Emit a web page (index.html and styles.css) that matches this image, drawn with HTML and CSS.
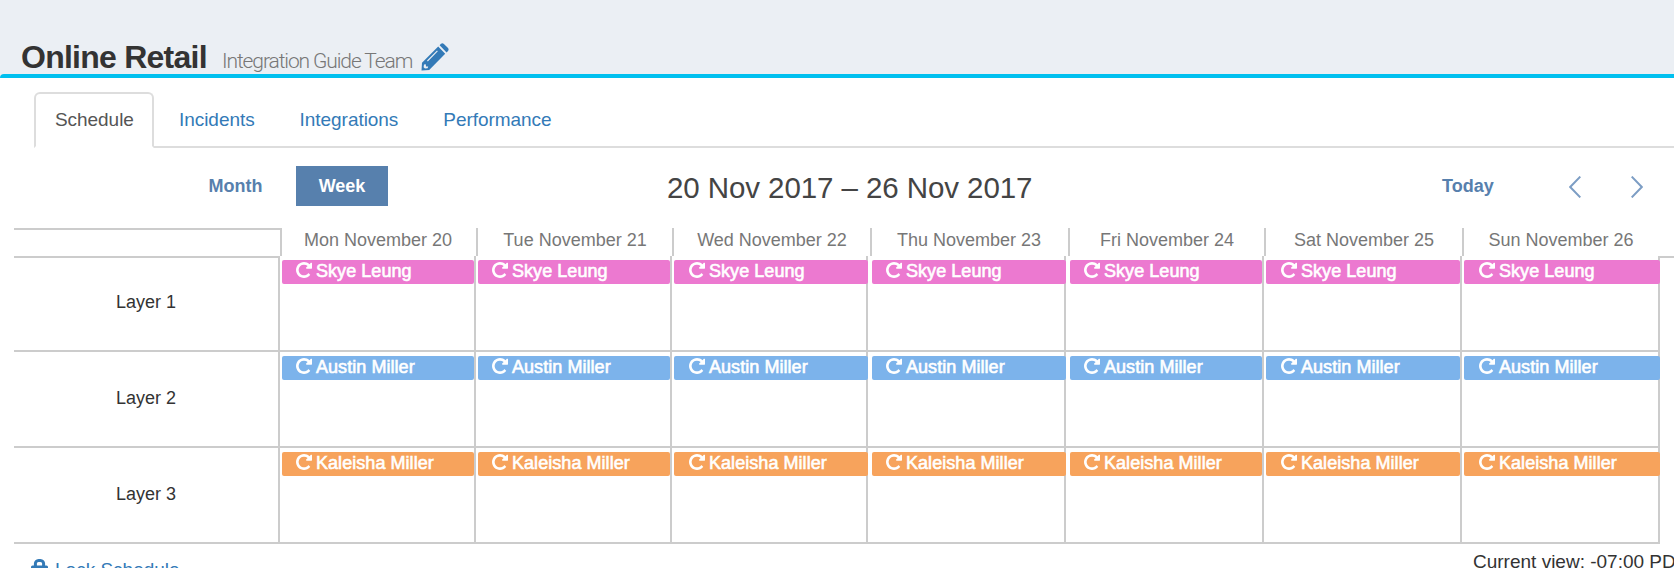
FILE: index.html
```html
<!DOCTYPE html>
<html lang="en">
  <head>
    <meta charset="UTF-8" />
    <meta name="viewport" content="width=device-width, initial-scale=1.0" />
    <title>Online Retail</title>
    <link rel="stylesheet" href="styles.css">
  </head>

  <body>
    <svg class="sprite">
      <symbol id="redo" viewBox="128 128 1536 1536">
        <path fill="#fff" d="M1664 256v448q0 26-19 45t-45 19h-448q-42 0-59-40-17-39 14-69l138-138q-148-137-349-137-104 0-198.5 40.5t-163.5 109.5-109.5 163.5-40.5 198.5 40.5 198.5 109.5 163.5 163.5 109.5 198.5 40.5q119 0 225-52t179-147q7-10 23-12 15 0 25 9l137 138q9 8 9.5 20.5t-7.5 22.5q-109 132-264 204.5t-327 72.5q-156 0-298-61t-245-164-164-245-61-298 61-298 164-245 245-164 298-61q147 0 284.5 55.5t244.5 156.5l130-129q29-31 70-14 39 17 39 59z" />
      </symbol>
    </svg>

    <header class="header">
      <h1>Online Retail</h1>
      <span class="team">Integration Guide Team</span>
      <svg class="pencil" viewBox="0 0 28 28">
        <path fill="#337ab7" fill-rule="evenodd" d="M17.2 3.6L24.2 10.8 8.2 27 0.5 27.6 1 19.8zM3 21.5L2.6 24.2 4 25.6 6.6 25.2 7.2 23.6 5 23.4 4.8 21.2zM16 7.4L6 17.6 6.8 18.4 16.8 8.2z" />
        <path fill="#337ab7" d="M18.6 2.2L20 .8Q21.4-.4 22.9 .9L27 5Q28.2 6.6 27 8L25.6 9.4z" />
      </svg>
    </header>

    <main class="box">
      <nav class="tabs">
        <a class="tab active">Schedule</a>
        <a class="tab">Incidents</a>
        <a class="tab">Integrations</a>
        <a class="tab">Performance</a>
      </nav>

      <div class="toolbar">
        <div class="views">
          <button class="btn">Month</button>
          <button class="btn selected">Week</button>
        </div>
        <h2>20 Nov 2017 – 26 Nov 2017</h2>
        <div class="pager">
          <button class="btn today">Today</button>
          <svg class="arrow" viewBox="0 0 12 22"><path d="M11.3 .6L1.2 11 11.3 21.4" /></svg>
          <svg class="arrow" viewBox="0 0 12 22"><path d="M.7 .6L10.8 11 .7 21.4" /></svg>
        </div>
      </div>

      <div class="calendar">
        <div class="row days">
          <div class="corner"></div>
          <div class="day">Mon November 20</div>
          <div class="day">Tue November 21</div>
          <div class="day">Wed November 22</div>
          <div class="day">Thu November 23</div>
          <div class="day">Fri November 24</div>
          <div class="day">Sat November 25</div>
          <div class="day">Sun November 26</div>
        </div>
        <div class="row layer pink">
          <div class="name">Layer 1</div>
          <div class="cell"><div class="event"><svg><use href="#redo" /></svg>Skye Leung</div></div>
          <div class="cell"><div class="event"><svg><use href="#redo" /></svg>Skye Leung</div></div>
          <div class="cell"><div class="event"><svg><use href="#redo" /></svg>Skye Leung</div></div>
          <div class="cell"><div class="event"><svg><use href="#redo" /></svg>Skye Leung</div></div>
          <div class="cell"><div class="event"><svg><use href="#redo" /></svg>Skye Leung</div></div>
          <div class="cell"><div class="event"><svg><use href="#redo" /></svg>Skye Leung</div></div>
          <div class="cell"><div class="event"><svg><use href="#redo" /></svg>Skye Leung</div></div>
          <div class="edge"></div>
        </div>
        <div class="row layer blue">
          <div class="name">Layer 2</div>
          <div class="cell"><div class="event"><svg><use href="#redo" /></svg>Austin Miller</div></div>
          <div class="cell"><div class="event"><svg><use href="#redo" /></svg>Austin Miller</div></div>
          <div class="cell"><div class="event"><svg><use href="#redo" /></svg>Austin Miller</div></div>
          <div class="cell"><div class="event"><svg><use href="#redo" /></svg>Austin Miller</div></div>
          <div class="cell"><div class="event"><svg><use href="#redo" /></svg>Austin Miller</div></div>
          <div class="cell"><div class="event"><svg><use href="#redo" /></svg>Austin Miller</div></div>
          <div class="cell"><div class="event"><svg><use href="#redo" /></svg>Austin Miller</div></div>
        </div>
        <div class="row layer orange">
          <div class="name">Layer 3</div>
          <div class="cell"><div class="event"><svg><use href="#redo" /></svg>Kaleisha Miller</div></div>
          <div class="cell"><div class="event"><svg><use href="#redo" /></svg>Kaleisha Miller</div></div>
          <div class="cell"><div class="event"><svg><use href="#redo" /></svg>Kaleisha Miller</div></div>
          <div class="cell"><div class="event"><svg><use href="#redo" /></svg>Kaleisha Miller</div></div>
          <div class="cell"><div class="event"><svg><use href="#redo" /></svg>Kaleisha Miller</div></div>
          <div class="cell"><div class="event"><svg><use href="#redo" /></svg>Kaleisha Miller</div></div>
          <div class="cell"><div class="event"><svg><use href="#redo" /></svg>Kaleisha Miller</div></div>
        </div>
      </div>

      <footer class="footer">
        <a class="lock">
          <svg viewBox="0 0 17 18">
            <path d="M4.4 8V5A3.2 3.2 0 0 1 7.6 1.5H9.4A3.2 3.2 0 0 1 12.6 5V8" fill="none" stroke="#337ab7" stroke-width="3" />
            <rect y="6.5" width="17" height="11.5" rx="1.5" fill="#337ab7" />
          </svg>
          Lock Schedule
        </a>
        <span class="zone">Current view: -07:00 PDT</span>
      </footer>
    </main>
  </body>
</html>
```

FILE: styles.css
```css
* {
  margin: 0;
  padding: 0;
  box-sizing: border-box;
}

body {
  height: 568px;
  overflow: hidden;
  background: #ebeff4;
  color: #333;
  font-family: "Liberation Sans", Arial, sans-serif;
  font-size: 18px;
}

.sprite {
  display: none;
}

.header {
  display: flex;
  height: 74px;
  padding: 37px 0 0 21px;
}

.box {
  height: 494px;
  padding-top: 14px;
  border-top: 4px solid #00c0ef;
  border-top-left-radius: 4px;
  background: #fff;
}

h1 {
  width: 201px;
  font-size: 32px;
  line-height: 40px;
  letter-spacing: -0.75px;
  white-space: nowrap;
}

.team {
  width: 199px;
  color: #777;
  font-family: Roboto, sans-serif;
  font-weight: 300;
  font-size: 21px;
  line-height: 48px;
  letter-spacing: -1.1px;
  white-space: nowrap;
}

.pencil {
  width: 28px;
  height: 28px;
  margin-top: 6px;
}

/* tabs */
.tabs {
  display: flex;
  height: 56px;
  margin-left: 34px;
  line-height: 51px;
  font-size: 19px;
  letter-spacing: -0.05px;
}

.tab {
  padding: 2px 20px 0 25px;
  border-bottom: 2px solid #ddd;
  color: #337ab7;
}

.tab.active {
  width: 120px;
  padding: 0 0 0 19px;
  border: 2px solid #ddd;
  border-bottom-color: transparent;
  border-radius: 6px 6px 0 0;
  color: #555;
}

.tab:last-child {
  flex: 1;
}

/* toolbar */
.toolbar {
  display: flex;
  height: 80px;
  padding-top: 18px;
}

.views {
  display: flex;
  width: 668px;
  padding-left: 175px;
}

.btn {
  height: 40px;
  padding: 0 22px;
  border: none;
  background: none;
  color: #5780ad;
  font: bold 18px "Liberation Sans", Arial, sans-serif;
}

.views .btn {
  width: 121px;
}

.views .btn.selected {
  width: 92px;
  background: #5780ad;
  color: #fff;
}

h2 {
  width: 752px;
  color: #444;
  font-size: 29.5px;
  font-weight: normal;
  line-height: 43px;
  letter-spacing: -0.08px;
  text-indent: -1px;
}

.pager {
  display: flex;
}

.today {
  width: 149px;
  text-align: left;
}

.arrow {
  width: 12px;
  height: 22px;
  margin: 10px 50px 0 0;
  fill: none;
  stroke: #7c9dc4;
  stroke-width: 2;
}

.arrow:last-child {
  margin-right: 0;
}

/* calendar */
.calendar {
  margin-left: 14px;
}

.row {
  display: grid;
  grid-template-columns: 264px 196px 196px 196px 198px 198px 198px 198px 16px;
}

.days {
  grid-template-columns: 266px 196px 196px 198px 198px 196px 198px 196px;
  height: 28px;
  color: #777;
  line-height: 24px;
  text-align: center;
}

.corner {
  border-top: 2px solid #ccc;
}

.day {
  border-left: 2px solid #ccc;
}

.day:nth-child(2),
.day:nth-child(5) {
  padding-right: 2px;
}

.layer {
  height: 96px;
}

.layer.pink {
  height: 94px;
}

.name {
  border-top: 2px solid #ccc;
  padding-top: 34px;
  line-height: 24px;
  text-align: center;
}

.pink .name {
  padding-top: 32px;
}

.cell {
  border-left: 2px solid #ccc;
  border-top: 2px solid #ccc;
}

.pink .cell {
  padding-top: 2px;
  border-top: none;
}

.layer .cell:nth-child(8) {
  width: 200px;
  border-right: 2px solid #ccc;
}

.orange {
  width: 1646px;
  height: 98px;
  border-bottom: 2px solid #ccc;
}

.edge {
  border-top: 2px solid #ccc;
}

.event {
  display: flex;
  height: 24px;
  margin: 4px 0 0 2px;
  padding-left: 14px;
  border-radius: 2px;
  color: #fff;
  line-height: 22px;
  letter-spacing: 0.05px;
  white-space: nowrap;
  -webkit-text-stroke: 0.6px #fff;
}

.cell:nth-child(n + 4) .event {
  padding-left: 15px;
}

.cell:nth-child(4) .event,
.cell:nth-child(8) .event {
  margin-right: -2px;
}

.cell:nth-child(5) .event {
  margin-left: 4px;
  margin-right: -2px;
  padding-left: 14px;
}

.cell:nth-child(6) .event {
  margin-left: 4px;
  padding-left: 14px;
}

/* the bar hangs over the line of the next cell */
.cell:nth-child(4) .event,
.cell:nth-child(5) .event {
  position: relative;
  z-index: 1;
}

.pink .event {
  margin-top: 2px;
  background: #ec79d0;
}

.blue .event {
  background: #7cb3eb;
}

.orange .event {
  background: #f7a35c;
}

.event svg {
  width: 16px;
  height: 16px;
  margin: 2px 4px 0 0;
}

/* footer */
.footer {
  display: flex;
  justify-content: space-between;
  height: 24px;
  overflow: hidden;
  font-size: 19px;
  white-space: nowrap;
}

.lock {
  display: flex;
  padding: 15px 0 0 31px;
  color: #337ab7;
}

.lock svg {
  width: 17px;
  height: 18px;
  margin-right: 7px;
}

.zone {
  width: 201px;
  padding-top: 7px;
}
```
